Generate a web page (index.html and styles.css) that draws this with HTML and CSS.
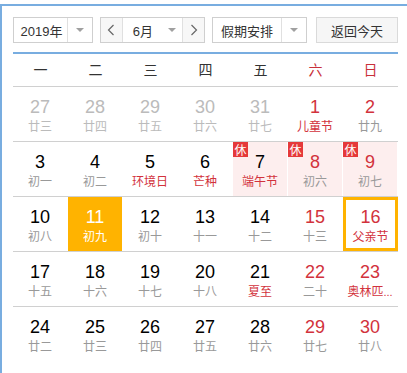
FILE: index.html
```html
<!DOCTYPE html>
<html lang="zh-CN">
<head>
    <meta charset="UTF-8">
    <title>万年历</title>
    <link rel="stylesheet" href="styles.css">
</head>
<body>
    <div class="calendar">
        <div class="toolbar">
            <div class="select year">
                <span class="select-text">2019年</span>
                <span class="select-arrow"><i class="caret"></i></span>
            </div>
            <div class="select month">
                <span class="nav-btn">
                    <svg width="8" height="12" viewBox="0 0 8 12"><polyline points="6.5,1 1.5,6 6.5,11" fill="none" stroke="#666" stroke-width="1.2"/></svg>
                </span>
                <span class="select-text">6月</span>
                <span class="select-arrow plain"><i class="caret"></i></span>
                <span class="nav-btn">
                    <svg width="8" height="12" viewBox="0 0 8 12"><polyline points="1.5,1 6.5,6 1.5,11" fill="none" stroke="#666" stroke-width="1.2"/></svg>
                </span>
            </div>
            <div class="select holiday">
                <span class="select-text">假期安排</span>
                <span class="select-arrow"><i class="caret"></i></span>
            </div>
            <button class="today-btn">返回今天</button>
        </div>

        <div class="week">
            <span>一</span><span>二</span><span>三</span><span>四</span><span>五</span>
            <span class="weekend">六</span><span class="weekend">日</span>
        </div>

        <div class="days">
            <div class="row">
                <div class="day other"><b>27</b><em>廿三</em></div>
                <div class="day other"><b>28</b><em>廿四</em></div>
                <div class="day other"><b>29</b><em>廿五</em></div>
                <div class="day other"><b>30</b><em>廿六</em></div>
                <div class="day other"><b>31</b><em>廿七</em></div>
                <div class="day red fest"><b>1</b><em>儿童节</em></div>
                <div class="day red"><b>2</b><em>廿九</em></div>
            </div>
            <div class="row">
                <div class="day"><b>3</b><em>初一</em></div>
                <div class="day"><b>4</b><em>初二</em></div>
                <div class="day fest"><b>5</b><em>环境日</em></div>
                <div class="day fest"><b>6</b><em>芒种</em></div>
                <div class="day rest fest"><span class="badge">休</span><b>7</b><em>端午节</em></div>
                <div class="day rest red"><span class="badge">休</span><b>8</b><em>初六</em></div>
                <div class="day rest red"><span class="badge">休</span><b>9</b><em>初七</em></div>
            </div>
            <div class="row">
                <div class="day"><b>10</b><em>初八</em></div>
                <div class="day today"><b>11</b><em>初九</em></div>
                <div class="day"><b>12</b><em>初十</em></div>
                <div class="day"><b>13</b><em>十一</em></div>
                <div class="day"><b>14</b><em>十二</em></div>
                <div class="day red"><b>15</b><em>十三</em></div>
                <div class="day red fest selected"><b>16</b><em>父亲节</em></div>
            </div>
            <div class="row">
                <div class="day"><b>17</b><em>十五</em></div>
                <div class="day"><b>18</b><em>十六</em></div>
                <div class="day"><b>19</b><em>十七</em></div>
                <div class="day"><b>20</b><em>十八</em></div>
                <div class="day fest"><b>21</b><em>夏至</em></div>
                <div class="day red"><b>22</b><em>二十</em></div>
                <div class="day red fest"><b>23</b><em title="奥林匹克日">奥林匹<span class="dots">...</span></em></div>
            </div>
            <div class="row last">
                <div class="day"><b>24</b><em>廿二</em></div>
                <div class="day"><b>25</b><em>廿三</em></div>
                <div class="day"><b>26</b><em>廿四</em></div>
                <div class="day"><b>27</b><em>廿五</em></div>
                <div class="day"><b>28</b><em>廿六</em></div>
                <div class="day red"><b>29</b><em>廿七</em></div>
                <div class="day red"><b>30</b><em>廿八</em></div>
            </div>
        </div>
    </div>
</body>
</html>
```

FILE: styles.css
```css
* {
    margin: 0;
    padding: 0;
    box-sizing: border-box;
}
body {
    background-color: #fff;
    font-family: "Liberation Sans", "Noto Sans CJK SC", sans-serif;
    color: #333;
}
.calendar {
    margin-top: 4px;
    width: 420px;
    min-height: 369px;
    border-top: 2px solid #78ade0;
    border-left: 2px solid #78ade0;
    padding: 11px 0 0 11px;
}
.toolbar {
    display: flex;
    width: 385px;
    height: 26px;
    gap: 7px;
    margin-bottom: 9px;
}
.select {
    display: flex;
    height: 26px;
    border: 1px solid #cfcfcf;
    background-color: #fff;
    font-size: 13px;
    color: #333;
}
.select-text {
    flex: 1;
    display: flex;
    align-items: center;
    justify-content: center;
}
.select-arrow {
    width: 25px;
    display: flex;
    align-items: center;
    justify-content: center;
    border-left: 1px solid #e0e0e0;
}
.select-arrow.plain {
    border-left: none;
    width: 22px;
}
.caret {
    display: block;
    width: 0;
    height: 0;
    border-left: 4px solid transparent;
    border-right: 4px solid transparent;
    border-top: 4px solid #a0a0a0;
}
.year {
    width: 80px;
}
.year .select-text {
    padding-left: 2px;
}
.month {
    width: 105px;
}
.month .select-text {
    flex: none;
    width: 38px;
    padding-left: 10px;
    justify-content: flex-start;
}
.nav-btn {
    width: 22px;
    display: flex;
    align-items: center;
    justify-content: center;
    background-color: #f7f7f7;
}
.nav-btn:first-child {
    border-right: 1px solid #e0e0e0;
}
.nav-btn:last-child {
    border-left: 1px solid #e0e0e0;
}
.holiday {
    width: 95px;
}
.today-btn {
    margin-left: 2px;
    width: 82px;
    height: 26px;
    border: 1px solid #dadada;
    background-color: #f6f6f6;
    font-family: "Liberation Sans", "Noto Sans CJK SC", sans-serif;
    font-size: 13px;
    color: #333;
}
.week {
    display: grid;
    grid-template-columns: repeat(7, 55px);
    width: 385px;
    height: 35px;
    border-top: 2px solid #78ade0;
    border-bottom: 1px solid #d0d0d0;
    font-family: "Noto Sans CJK SC", sans-serif;
    font-size: 14px;
    color: #333;
}
.week span {
    display: flex;
    align-items: center;
    justify-content: center;
    padding-bottom: 2px;
}
.week .weekend {
    color: #c9303a;
}
.days {
    width: 385px;
}
.row {
    display: grid;
    grid-template-columns: repeat(7, 55px);
    height: 55px;
    border-bottom: 1px solid #d0d0d0;
}
.row.last {
    border-bottom: none;
}
.day {
    position: relative;
    height: 54px;
    padding-top: 9px;
    border-right: 1px solid #fff;
    text-align: center;
}
.day b {
    display: block;
    height: 22px;
    line-height: 22px;
    font-size: 18px;
    font-weight: normal;
    color: #000;
}
.day em {
    display: block;
    height: 16px;
    line-height: 16px;
    font-style: normal;
    font-family: "Noto Sans CJK SC", sans-serif;
    font-size: 12px;
    color: #999;
    white-space: nowrap;
}
.dots {
    font-family: "Liberation Sans", sans-serif;
    font-size: 11px;
}
.day.other b,
.day.other em {
    color: #bbb;
}
.day.red b {
    color: #d2323c;
}
.day.fest em {
    color: #d2323c;
}
.day.rest {
    background-color: #fdeeee;
}
.badge {
    position: absolute;
    top: 0;
    left: 0;
    width: 15px;
    height: 15px;
    line-height: 15px;
    background-color: #e5393a;
    color: #fff;
    font-family: "Noto Sans CJK SC", sans-serif;
    font-size: 12px;
    text-align: center;
}
.day.today {
    background-color: #ffb300;
}
.day.today b,
.day.today em {
    color: #fff;
}
.day.selected {
    border: 3px solid #ffb300;
    padding-top: 6px;
}
```
